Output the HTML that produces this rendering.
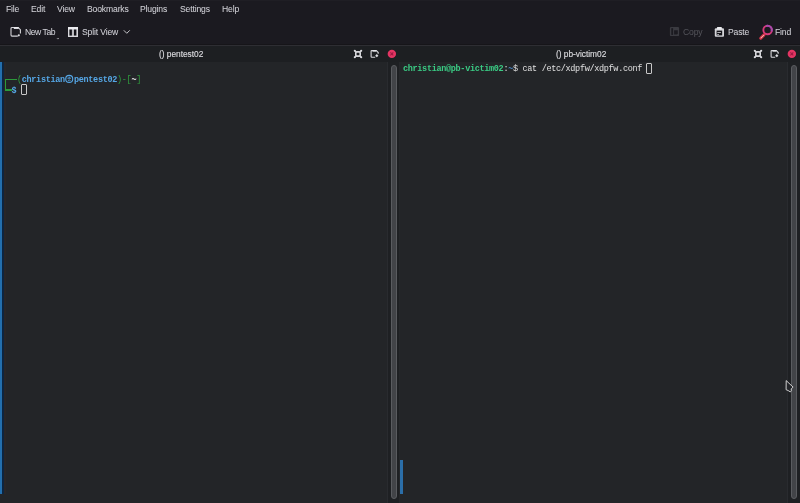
<!DOCTYPE html>
<html><head><meta charset="utf-8">
<style>
*{margin:0;padding:0;box-sizing:border-box}
html,body{width:800px;height:503px;overflow:hidden;background:#1b1a20}
body{position:relative;font-family:"Liberation Sans",sans-serif;color:#d4d4da}
.abs{position:absolute}
svg{position:absolute;overflow:visible}
.mi{will-change:transform;-webkit-text-stroke:0.04px currentColor;position:absolute;top:4px;font-size:8.6px;letter-spacing:-0.15px;line-height:11px;color:#d2d2d8;white-space:nowrap}
.tt{will-change:transform;-webkit-text-stroke:0.04px currentColor;position:absolute;top:27px;font-size:8.6px;letter-spacing:-0.15px;line-height:11px;color:#d2d2d8;white-space:nowrap}
.htitle{will-change:transform;-webkit-text-stroke:0.15px currentColor;position:absolute;top:49px;font-size:8.3px;letter-spacing:0px;line-height:11px;color:#dadade;white-space:nowrap}
.term{position:absolute;top:62px;height:441px;background:#232528}
.gut{position:absolute;top:62px;height:441px;background:#1e2023}
.sb{position:absolute;top:65px;width:6px;height:434px;border-radius:3px;background:#424448;border:1px solid #5a5c60}
.mono{will-change:transform;font-family:"Liberation Mono",monospace;font-size:8.5px;letter-spacing:-0.32px;line-height:10.8px;white-space:pre;position:absolute}
.cur{position:absolute;width:5.5px;height:10.5px;border:1px solid #c8c8c8;border-radius:1px}
</style></head><body>
<!-- menubar -->
<div class="abs" style="left:0;top:0;width:800px;height:1px;background:#1f1e24"></div>
<div class="mi" style="left:6px">File</div>
<div class="mi" style="left:31px">Edit</div>
<div class="mi" style="left:57px">View</div>
<div class="mi" style="left:87px">Bookmarks</div>
<div class="mi" style="left:140px">Plugins</div>
<div class="mi" style="left:180px">Settings</div>
<div class="mi" style="left:222px">Help</div>

<!-- toolbar -->
<svg style="left:0;top:0" width="800" height="45">
  <!-- new tab icon -->
  <path d="M17.8 36.1 H12 Q11 36.1 11 35.1 V28.4 Q11 27.5 12 27.5 H18.2 L20.4 29.7 V33.4" fill="none" stroke="#d4d4d8" stroke-width="1.1"/>
  <rect x="13.8" y="27.1" width="4.8" height="1.8" fill="#ececf0"/>
  <circle cx="18.8" cy="35.3" r="1.1" fill="#dcdce0"/>
  <path d="M57 38.2 L57.9 39.1 L58.8 38.2" fill="none" stroke="#c8c8cc" stroke-width="0.8"/>
  <!-- split view icon -->
  <rect x="68" y="27" width="10" height="10" fill="#d8d8dc"/>
  <rect x="68" y="27" width="10" height="2.4" fill="#ececf0"/>
  <rect x="69.4" y="29.5" width="2.5" height="6.1" fill="#121116"/>
  <rect x="73.9" y="29.5" width="2.5" height="6.1" fill="#121116"/>
  <rect x="72.6" y="29.5" width="0.6" height="6.1" fill="#8a8a90"/>
  <path d="M123.8 30.3 L126.8 33.3 L129.8 30.3" fill="none" stroke="#c8c8cc" stroke-width="1"/>
  <!-- copy icon (disabled) -->
  <rect x="669.9" y="26.9" width="9.2" height="9.2" rx="1.2" fill="#3a3a40"/>
  <rect x="671.3" y="28.2" width="1.8" height="6.7" fill="#1b1a20"/>
  <path d="M674.1 30.2 H677.8 V33.2 Q677.8 34.6 676.4 34.6 H674.1 Z" fill="#1b1a20"/>
  <!-- paste icon -->
  <rect x="714.8" y="28.2" width="9.2" height="8.5" rx="1" fill="#d6d6da"/>
  <rect x="716.6" y="30.6" width="5.6" height="4.8" fill="#16151a"/>
  <rect x="716.9" y="27" width="5" height="2.4" rx="0.8" fill="#ececf0"/>
  <rect x="717.3" y="32" width="3.6" height="0.9" fill="#c8c8cc"/>
  <rect x="717.3" y="34" width="1.6" height="0.9" fill="#c8c8cc"/>
  <!-- find icon -->
  <circle cx="767.6" cy="30" r="4.25" fill="none" stroke="#d83a7c" stroke-width="1.9"/>
  <path d="M766.1 26 A4.25 4.25 0 0 1 771.6 31.4" fill="none" stroke="#a24cb2" stroke-width="1.9" opacity="0.9"/>
  <path d="M760.7 38.2 L764 34.9" stroke="#d8344c" stroke-width="3" stroke-linecap="round"/>
  <path d="M761 37.9 L763.7 35.2" stroke="#e8c4b4" stroke-width="1" stroke-linecap="round"/>
  <!-- separator -->
  <rect x="0" y="44" width="800" height="1" fill="#161519"/>
</svg>
<div class="tt" style="left:25px;letter-spacing:-0.45px">New Tab</div>
<div class="tt" style="left:82px">Split View</div>
<div class="tt" style="left:683px;color:#535359">Copy</div>
<div class="tt" style="left:728px">Paste</div>
<div class="tt" style="left:775px">Find</div>

<div class="abs" style="left:0;top:45px;width:800px;height:1px;background:#2e2e33"></div>
<div class="abs" style="left:0;top:46px;width:800px;height:16px;background:#1d1f22"></div>
<div class="htitle" style="left:159px">() pentest02</div>
<div class="htitle" style="left:556px">() pb-victim02</div>

<!-- header icons -->
<svg style="left:0;top:0" width="800" height="62">
  <g>
    <rect x="355.8" y="51.9" width="4.4" height="4.2" rx="0.9" fill="none" stroke="#d8d8dc" stroke-width="1.6"/>
    <g fill="#d8d8dc">
      <circle cx="354.8" cy="50.8" r="1.05"/><circle cx="361.2" cy="50.8" r="1.05"/>
      <circle cx="354.8" cy="57.2" r="1.05"/><circle cx="361.2" cy="57.2" r="1.05"/>
    </g>
    <path d="M354.8 50.8 L356.4 52.4 M361.2 50.8 L359.6 52.4 M354.8 57.2 L356.4 55.6 M361.2 57.2 L359.6 55.6" stroke="#d8d8dc" stroke-width="1.3"/>
    <path d="M375.2 57.3 H371.8 Q371.1 57.3 371.1 56.6 V51.3 Q371.1 50.6 371.8 50.6 H376.3 L378.2 52.5 V53.8" fill="none" stroke="#d8d8dc" stroke-width="1.1"/>
    <rect x="372.6" y="50.1" width="3.6" height="1.5" fill="#e6e6ea"/>
    <path d="M376.8 54.1 L378.4 55.7 L376.8 57.3 L375.2 55.7 Z" fill="#dcdce0"/>
    <circle cx="391.85" cy="53.9" r="4.2" fill="#e43563"/>
    <path d="M390.4 52.4 L393.3 55.4 M393.3 52.4 L390.4 55.4" stroke="#a01a44" stroke-width="1.1"/>
  </g>
  <g transform="translate(400 0)">
    <rect x="355.8" y="51.9" width="4.4" height="4.2" rx="0.9" fill="none" stroke="#d8d8dc" stroke-width="1.6"/>
    <g fill="#d8d8dc">
      <circle cx="354.8" cy="50.8" r="1.05"/><circle cx="361.2" cy="50.8" r="1.05"/>
      <circle cx="354.8" cy="57.2" r="1.05"/><circle cx="361.2" cy="57.2" r="1.05"/>
    </g>
    <path d="M354.8 50.8 L356.4 52.4 M361.2 50.8 L359.6 52.4 M354.8 57.2 L356.4 55.6 M361.2 57.2 L359.6 55.6" stroke="#d8d8dc" stroke-width="1.3"/>
    <path d="M375.2 57.3 H371.8 Q371.1 57.3 371.1 56.6 V51.3 Q371.1 50.6 371.8 50.6 H376.3 L378.2 52.5 V53.8" fill="none" stroke="#d8d8dc" stroke-width="1.1"/>
    <rect x="372.6" y="50.1" width="3.6" height="1.5" fill="#e6e6ea"/>
    <path d="M376.8 54.1 L378.4 55.7 L376.8 57.3 L375.2 55.7 Z" fill="#dcdce0"/>
    <circle cx="391.85" cy="53.9" r="4.2" fill="#e43563"/>
    <path d="M390.4 52.4 L393.3 55.4 M393.3 52.4 L390.4 55.4" stroke="#a01a44" stroke-width="1.1"/>
  </g>
</svg>

<!-- terminals -->
<div class="term" style="left:0;width:387px"></div>
<div class="gut" style="left:387px;width:13px"></div>
<div class="abs" style="left:387px;top:62px;width:1px;height:441px;background:#292b2f"></div>
<div class="term" style="left:400px;width:387px"></div>
<div class="gut" style="left:787px;width:13px"></div>
<div class="abs" style="left:787px;top:62px;width:1px;height:441px;background:#292b2f"></div>
<div class="abs" style="left:399px;top:62px;width:1px;height:441px;background:#25272a"></div>
<div class="sb" style="left:391px"></div>
<div class="sb" style="left:791px"></div>

<div class="abs" style="left:0;top:62px;width:2.2px;height:432px;background:#236fad"></div>
<div class="abs" style="left:2.2px;top:62px;width:1.8px;height:432px;background:#0d2540"></div>
<div class="abs" style="left:4px;top:62px;width:1.8px;height:432px;background:#292627"></div>
<div class="abs" style="left:400.2px;top:460px;width:2.8px;height:34px;background:#2b6ea8"></div>

<!-- left prompt -->
<div class="abs" style="left:4.7px;top:78.6px;width:1.3px;height:12px;background:#2c9a3b"></div>
<div class="abs" style="left:4.7px;top:78.6px;width:12.4px;height:1.3px;background:#2c9a3b"></div>
<div class="abs" style="left:4.7px;top:89.3px;width:7.5px;height:1.3px;background:#2c9a3b"></div>
<div class="mono" style="left:16.64px;top:75.1px"><span style="color:#2f9f3e">(</span><b style="color:#55a7e6">christian</b></div>
<svg style="left:0;top:0" width="200" height="100"><circle cx="69.22" cy="78.9" r="3.5" fill="none" stroke="#55a7e6" stroke-width="1.1"/><path d="M67.42 78.2 H71.02 M69.22 76.6 V78.2 M67.92 80.6 Q69.22 79.4 70.52 80.6" fill="none" stroke="#55a7e6" stroke-width="0.9"/></svg>
<div class="mono" style="left:74.0px;top:75.1px"><b style="color:#55a7e6">pentest02</b><span style="color:#2f9f3e">)-[</span><b style="color:#e6e6e6">~</b><span style="color:#2f9f3e">]</span></div>
<div class="mono" style="left:2.3px;top:85.9px">  <b style="color:#55a7e6">$</b> </div>
<div class="cur" style="left:21px;top:84.4px"></div>

<!-- right prompt -->
<div class="mono" style="left:402.5px;top:64.2px"><b style="color:#3acb84">christian@pb-victim02</b><span style="color:#e0e0e0">:</span><b style="color:#4a84bc">~</b><span style="color:#e0e0e0">$ cat /etc/xdpfw/xdpfw.conf </span></div>
<div class="cur" style="left:646.1px;top:63px"></div>

<!-- mouse pointer -->
<svg style="left:0;top:0" width="800" height="503">
  <path d="M786.2 380.6 L793.1 387.1 L791.2 388.9 L791.4 390.8 L790.3 391.9 L788.1 390.5 L786.1 389.7 Z" fill="#24262a" stroke="#d8d8d8" stroke-width="0.95" stroke-linejoin="round"/>
</svg>
</body></html>
